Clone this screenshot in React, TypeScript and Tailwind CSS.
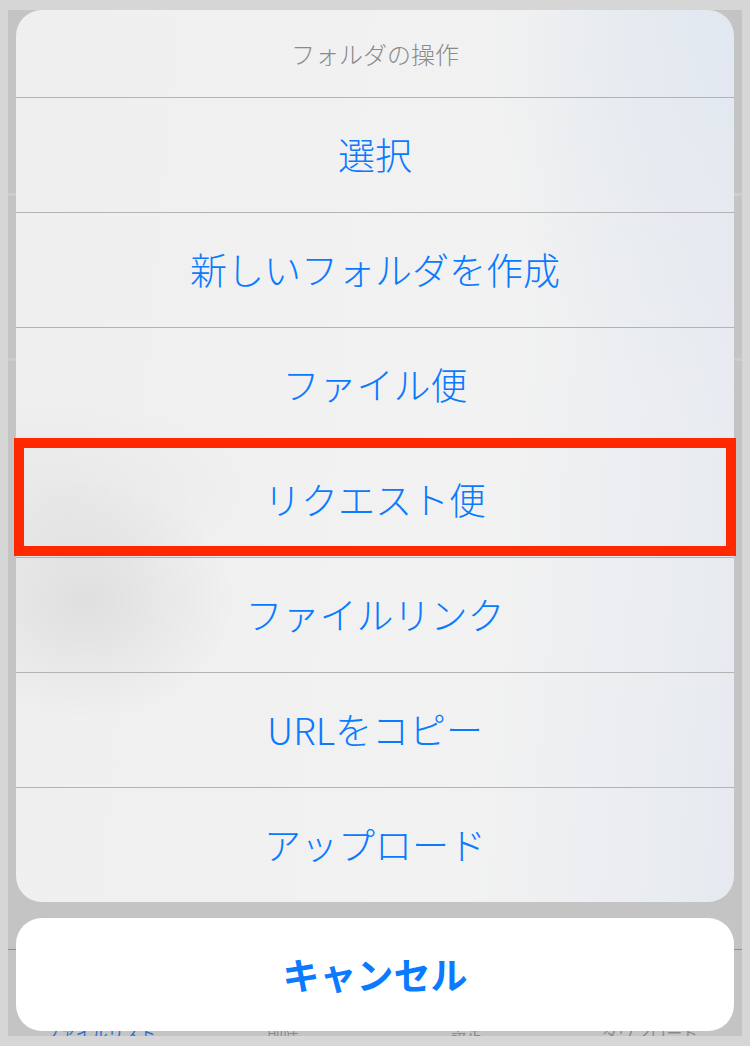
const actions = [
  "選択",
  "新しいフォルダを作成",
  "ファイル便",
  "リクエスト便",
  "ファイルリンク",
  "URLをコピー",
  "アップロード",
];

const tabs = [
  { label: "ファイルリスト", active: true },
  { label: "削除", active: false },
  { label: "設定", active: false },
  { label: "ダウンロード", active: false },
];

const jp = "font-['Noto_Sans_CJK_JP','Noto_Sans',sans-serif]";

export default function App() {
  return (
    <div className={`w-[750px] h-[1046px] bg-[#d6d6d6] px-[8px] pt-[10px] ${jp}`}>
      <div className="relative h-[1026px] bg-[#c4c4c4] px-[8px] overflow-hidden">
        {/* dimmed app content behind the sheet */}
        <div className="absolute left-0 right-0 top-[183px] h-[3px] bg-[#cdcdcd]" />
        <div className="absolute left-0 right-0 top-[348px] h-[3px] bg-[#cbcbcb]" />
        <div className="absolute left-0 right-0 top-[939px] h-px bg-[#8e8e8e]" />

        {/* action sheet */}
        <div className="relative flex flex-col h-[892px] rounded-[26px] overflow-hidden bg-[radial-gradient(ellipse_150px_120px_at_70px_590px,rgba(0,0,0,0.07),transparent),radial-gradient(ellipse_200px_90px_at_40px_480px,rgba(0,0,0,0.03),transparent),radial-gradient(ellipse_260px_420px_at_100%_0%,#e2e8f0,transparent),linear-gradient(95deg,#efefef_0%,#f2f2f2_65%,#e6eaf0_100%)]">
          <div className="h-[87px] flex items-center justify-center text-[24px] font-light text-[#8a8a8a]">
            フォルダの操作
          </div>
          {actions.map((a) => (
            <div
              key={a}
              className="h-[115px] flex items-center justify-center border-t border-[#b3b3b3] text-[37px] font-light text-[#0a7aff]"
            >
              {a}
            </div>
          ))}
        </div>

        {/* cancel */}
        <div className="relative mt-[16px] h-[113px] rounded-[26px] bg-white flex items-center justify-center text-[37px] font-bold text-[#0a7aff]">
          キャンセル
        </div>

        {/* tab bar peeking under the sheet */}
        <div className="-mx-[8px] h-[5px] overflow-hidden grid grid-cols-4">
          {tabs.map((t) => (
            <div
              key={t.label}
              className={`text-center text-[16px] leading-none -mt-[7px] ${t.active ? "text-[#2a6fd0]" : "text-[#8a8a8a]"}`}
            >
              {t.label}
            </div>
          ))}
        </div>

        {/* highlight box */}
        <div className="absolute left-[6px] top-[428px] w-[722px] h-[118px] border-[10px] border-[#ff2800]" />
      </div>
    </div>
  );
}
